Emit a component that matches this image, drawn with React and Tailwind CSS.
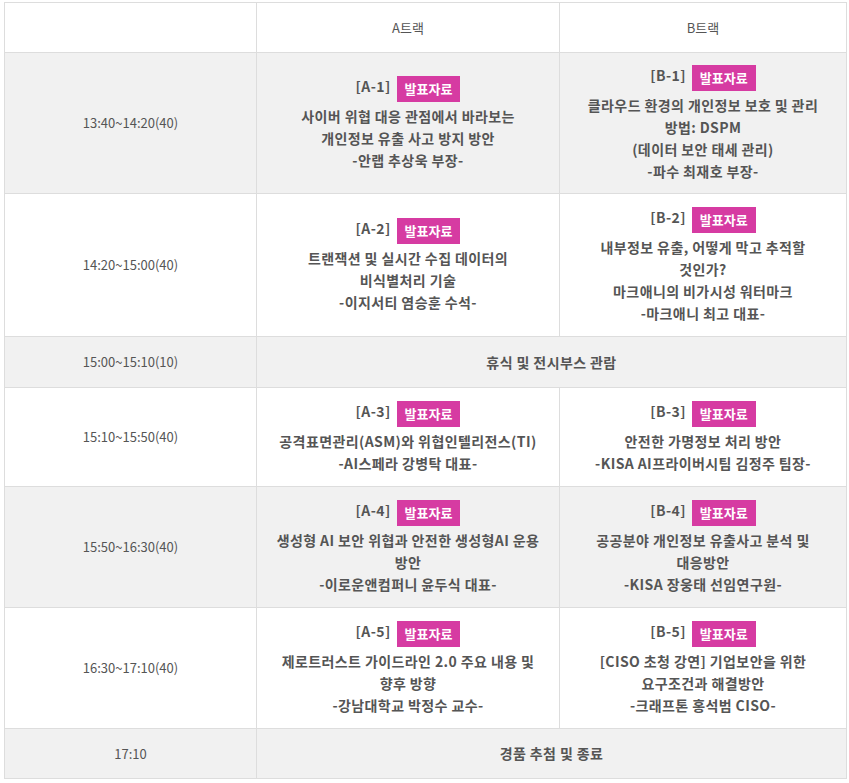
const rows = [
  {
    time: '13:40~14:20(40)',
    bg: 'bg-[#f1f1f1]',
    h: 'h-[141px]',
    a: { code: '[A-1]', lines: ['사이버 위협 대응 관점에서 바라보는', '개인정보 유출 사고 방지 방안', '-안랩 추상욱 부장-'] },
    b: { code: '[B-1]', lines: ['클라우드 환경의 개인정보 보호 및 관리', '방법: DSPM', '(데이터 보안 태세 관리)', '-파수 최재호 부장-'] },
  },
  {
    time: '14:20~15:00(40)',
    bg: 'bg-white',
    h: 'h-[143px]',
    a: { code: '[A-2]', lines: ['트랜잭션 및 실시간 수집 데이터의', '비식별처리 기술', '-이지서티 염승훈 수석-'] },
    b: { code: '[B-2]', lines: ['내부정보 유출, 어떻게 막고 추적할', '것인가?', '마크애니의 비가시성 워터마크', '-마크애니 최고 대표-'] },
  },
  { time: '15:00~15:10(10)', bg: 'bg-[#f1f1f1]', h: 'h-[51px]', span: '휴식 및 전시부스 관람' },
  {
    time: '15:10~15:50(40)',
    bg: 'bg-white',
    h: 'h-[99px]',
    a: { code: '[A-3]', lines: ['공격표면관리(ASM)와 위협인텔리전스(TI)', '-AI스페라 강병탁 대표-'] },
    b: { code: '[B-3]', lines: ['안전한 가명정보 처리 방안', '-KISA AI프라이버시팀 김정주 팀장-'] },
  },
  {
    time: '15:50~16:30(40)',
    bg: 'bg-[#f1f1f1]',
    h: 'h-[121px]',
    a: { code: '[A-4]', lines: ['생성형 AI 보안 위협과 안전한 생성형AI 운용', '방안', '-이로운앤컴퍼니 윤두식 대표-'] },
    b: { code: '[B-4]', lines: ['공공분야 개인정보 유출사고 분석 및', '대응방안', '-KISA 장웅태 선임연구원-'] },
  },
  {
    time: '16:30~17:10(40)',
    bg: 'bg-white',
    h: 'h-[121px]',
    a: { code: '[A-5]', lines: ['제로트러스트 가이드라인 2.0 주요 내용 및', '향후 방향', '-강남대학교 박정수 교수-'] },
    b: { code: '[B-5]', lines: ['[CISO 초청 강연] 기업보안을 위한', '요구조건과 해결방안', '-크래프톤 홍석범 CISO-'] },
  },
  { time: '17:10', bg: 'bg-[#f1f1f1]', h: 'h-[50px]', span: '경품 추첨 및 종료' },
]

function Session({ s }) {
  return (
    <div className="font-bold text-[14px] leading-[22px] tracking-[0.4px] text-[#555]">
      <div className="mb-[3px]">
        {s.code}
        <span className="ml-[6px] inline-block h-[26px] px-2 bg-[#d63ba2] text-white text-[13px] leading-[26px] tracking-normal align-middle">
          발표자료
        </span>
      </div>
      {s.lines.map((l, i) => (
        <div key={i}>{l}</div>
      ))}
    </div>
  )
}

export default function App() {
  return (
    <div
      className="bg-white pt-[2px] pl-[4px] min-h-[783px]"
      style={{ fontFamily: '"Noto Sans CJK KR", "Noto Sans", sans-serif' }}
    >
      <table className="w-[842px] border-collapse table-fixed text-center">
        <colgroup>
          <col className="w-[252px]" />
          <col className="w-[303px]" />
          <col className="w-[287px]" />
        </colgroup>
        <thead>
          <tr className="bg-white h-[50px]">
            <th className="border border-[#dddddd]" />
            <th className="border border-[#dddddd] font-normal text-[13px] text-[#555]">A트랙</th>
            <th className="border border-[#dddddd] font-normal text-[13px] text-[#555]">B트랙</th>
          </tr>
        </thead>
        <tbody>
          {rows.map((r) => (
            <tr key={r.time} className={`${r.bg} ${r.h}`}>
              <td className="border border-[#dddddd] text-[13px] text-[#555]">{r.time}</td>
              {r.span ? (
                <td colSpan={2} className="border border-[#dddddd] font-bold text-[14px] tracking-[0.4px] text-[#555]">
                  {r.span}
                </td>
              ) : (
                <>
                  <td className="border border-[#dddddd] px-[14px]">
                    <Session s={r.a} />
                  </td>
                  <td className="border border-[#dddddd] px-[14px]">
                    <Session s={r.b} />
                  </td>
                </>
              )}
            </tr>
          ))}
        </tbody>
      </table>
    </div>
  )
}
